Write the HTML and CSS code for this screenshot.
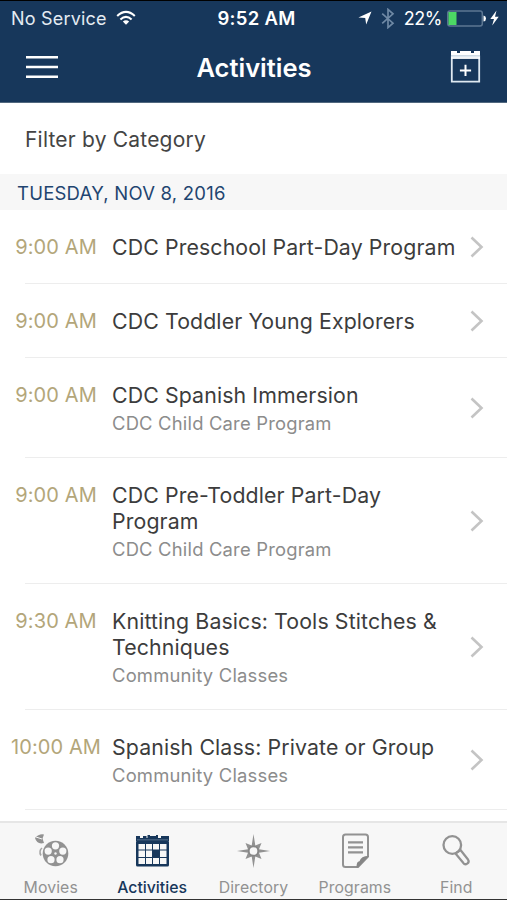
FILE: index.html
```html
<!DOCTYPE html>
<html lang="en">
<head>
    <meta charset="UTF-8">
    <meta name="viewport" content="width=device-width, initial-scale=1.0">
    <title>Activities</title>
    <link rel="stylesheet" href="styles.css">
</head>
<body>
    <div class="app">
        <!-- Header -->
        <header class="header">
            <div class="status-bar">
                <div class="status-left">
                    <span class="carrier">No Service</span>
                    <svg class="wifi" width="20" height="16" viewBox="0 0 20 16" fill="none" stroke="#fff" stroke-width="2.1">
                        <path d="M1.2 6Q10-2.2 18.8 6"/>
                        <path d="M4.4 9.4Q10 4.2 15.6 9.4"/>
                        <path d="M10 14.8L6.8 11.6Q10 8.8 13.2 11.6Z" fill="#fff" stroke="none"/>
                    </svg>
                </div>
                <span class="clock">9:52 AM</span>
                <div class="status-right">
                    <svg width="14" height="14" viewBox="0 0 14 14" fill="#fff"><path d="M13.5.5L8.2 13.5 7.2 7 .4 6.4Z"/></svg>
                    <svg class="bluetooth" width="14" height="21" viewBox="0 0 14 21" fill="none" stroke="#6f89a5" stroke-width="1.7"><path d="M1.2 5.7L12 15.2 7 19.6V1.4L12 5.8 1.2 15.3"/></svg>
                    <span class="percent">22%</span>
                    <svg class="battery" width="39" height="17" viewBox="0 0 39 17">
                        <rect x=".8" y="1" width="34.5" height="15" rx="2.2" fill="none" stroke="#5d7793" stroke-width="1.5"/>
                        <path d="M1.5 2H9.5V15H1.5Z" fill="#4cd964"/>
                        <path d="M36.5 5.5Q39 6 39 8.5T36.5 11.5Z" fill="#fff"/>
                    </svg>
                    <svg class="bolt" width="9" height="16" viewBox="0 0 9 16" fill="#fff"><path d="M6.5.5L.3 9H4L2.2 15.5 8.7 6.7H5Z"/></svg>
                </div>
            </div>
            <div class="nav-bar">
                <svg class="menu" width="32" height="24" viewBox="0 0 32 24" fill="#fff"><path d="M0 1H32V3.6H0ZM0 10.7H32V13.3H0ZM0 20.4H32V23H0Z"/></svg>
                <h1>Activities</h1>
                <svg class="add" width="31" height="32" viewBox="0 0 31 32">
                    <path d="M1 0H7V2H10V0H21V2H24V0H30V5H1Z" fill="#fff"/>
                    <path d="M1 5H30" stroke="#7f95ab" stroke-width="1"/>
                    <path d="M1.8 5.5H29.2V30.7H1.8Z" fill="none" stroke="#dfe9f1" stroke-width="1.8"/>
                    <path d="M1 7H30" stroke="#fff" stroke-width="1.8"/>
                    <path d="M15.5 13.8V25M9.9 19.4H21.1" stroke="#fff" stroke-width="2"/>
                </svg>
            </div>
        </header>

        <div class="filter">Filter by Category</div>
        <h2 class="day">TUESDAY, NOV 8, 2016</h2>

        <!-- Activities list -->
        <ul class="activities">
            <li class="activity">
                <span class="time">9:00 AM</span>
                <div class="details"><h3>CDC Preschool Part-Day Program</h3></div>
                <svg class="chevron" width="14" height="22" viewBox="0 0 14 22"><path d="M1.5 1.5L11.5 11 1.5 20.5"/></svg>
            </li>
            <li class="activity">
                <span class="time">9:00 AM</span>
                <div class="details"><h3>CDC Toddler Young Explorers</h3></div>
                <svg class="chevron" width="14" height="22" viewBox="0 0 14 22"><path d="M1.5 1.5L11.5 11 1.5 20.5"/></svg>
            </li>
            <li class="activity">
                <span class="time">9:00 AM</span>
                <div class="details">
                    <h3>CDC Spanish Immersion</h3>
                    <p>CDC Child Care Program</p>
                </div>
                <svg class="chevron" width="14" height="22" viewBox="0 0 14 22"><path d="M1.5 1.5L11.5 11 1.5 20.5"/></svg>
            </li>
            <li class="activity">
                <span class="time">9:00 AM</span>
                <div class="details">
                    <h3>CDC Pre-Toddler Part-Day<br>Program</h3>
                    <p>CDC Child Care Program</p>
                </div>
                <svg class="chevron" width="14" height="22" viewBox="0 0 14 22"><path d="M1.5 1.5L11.5 11 1.5 20.5"/></svg>
            </li>
            <li class="activity">
                <span class="time">9:30 AM</span>
                <div class="details">
                    <h3>Knitting Basics: Tools Stitches &amp;<br>Techniques</h3>
                    <p>Community Classes</p>
                </div>
                <svg class="chevron" width="14" height="22" viewBox="0 0 14 22"><path d="M1.5 1.5L11.5 11 1.5 20.5"/></svg>
            </li>
            <li class="activity">
                <span class="time">10:00 AM</span>
                <div class="details">
                    <h3>Spanish Class: Private or Group</h3>
                    <p>Community Classes</p>
                </div>
                <svg class="chevron" width="14" height="22" viewBox="0 0 14 22"><path d="M1.5 1.5L11.5 11 1.5 20.5"/></svg>
            </li>
        </ul>

        <!-- Tab bar -->
        <nav class="tab-bar">
            <a class="tab">
                <svg width="36" height="36" viewBox="0 0 36 36">
                    <circle cx="22.5" cy="20.5" r="12.8" fill="#929292"/>
                    <g fill="#f7f7f7">
                        <circle cx="22.5" cy="12.8" r="3.6"/>
                        <circle cx="29.8" cy="18.1" r="3.6"/>
                        <circle cx="27" cy="26.7" r="3.6"/>
                        <circle cx="18" cy="26.7" r="3.6"/>
                        <circle cx="15.2" cy="18.1" r="3.6"/>
                        <circle cx="22.5" cy="20.5" r="1.2"/>
                    </g>
                    <path d="M2 5Q6 .5 11 1.5L9.5 5.5 11 10Q4 12 2 5Z" fill="#929292"/>
                    <path d="M3 4L9 6" stroke="#f7f7f7" stroke-width="1"/>
                    <path d="M9 15Q5.5 18 8 22.5" fill="none" stroke="#a5a5a5" stroke-width="1.6"/>
                </svg>
                <span>Movies</span>
            </a>
            <a class="tab active">
                <svg width="36" height="36" viewBox="0 0 36 36">
                    <path d="M2 3H6V5H9V3H13V2H24V5H27V3H35V8H2Z" fill="#17375b"/>
                    <path d="M13 1.5V5M16 2.5H22" stroke="#f7f7f7" stroke-width="1"/>
                    <path d="M3 7H34" stroke="#8296ab" stroke-width=".8"/>
                    <rect x="2" y="7.5" width="33" height="26" rx="1.5" fill="#17375b"/>
                    <g fill="#f7f7f7">
                        <path d="M4.5 11H11V16.5H4.5ZM12 11H18V16.5H12ZM19 11H25V16.5H19ZM26 11H32.5V16.5H26Z"/>
                        <path d="M4.5 17.5H11V24H4.5ZM12 17.5H18V24H12ZM26 17.5H32.5V24H26Z"/>
                        <path d="M4.5 25H11V31H4.5ZM12 25H18V31H12ZM19 25H25V31H19ZM26 25H32.5V31H26Z"/>
                    </g>
                </svg>
                <span>Activities</span>
            </a>
            <a class="tab">
                <svg width="36" height="36" viewBox="0 0 36 36">
                    <path d="M18.5 1L20.3 12.5 26.5 10 24 16.2 35 18 24 19.8 26.5 26 20.3 23.5 18.5 35 16.7 23.5 10.5 26 13 19.8 2 18 13 16.2 10.5 10 16.7 12.5Z" fill="#929292"/>
                    <circle cx="18.5" cy="18" r="4.7" fill="#f7f7f7" stroke="#868686" stroke-width="1.7"/>
                </svg>
                <span>Directory</span>
            </a>
            <a class="tab">
                <svg width="36" height="36" viewBox="0 0 36 36">
                    <path d="M8.5 1.5H28.5Q31 1.5 31 4V23.5L21 34H8.5Q6 34 6 31.5V4Q6 1.5 8.5 1.5Z" fill="none" stroke="#929292" stroke-width="2"/>
                    <path d="M31.5 23.5L21 34.5H19.5Q19.5 28 22.5 28.2 24 23 31.5 23Z" fill="#868686"/>
                    <path d="M11 9.3H26M11 14.3H26M11 19.3H26" stroke="#929292" stroke-width="2.2"/>
                </svg>
                <span>Programs</span>
            </a>
            <a class="tab">
                <svg width="36" height="36" viewBox="0 0 36 36" fill="none" stroke="#929292">
                    <circle cx="14.3" cy="12" r="8.8" stroke-width="2.3"/>
                    <path d="M17.5 20.5L25.2 29.8A2.9 2.9 0 0 0 30 26.5L22.5 17Z" stroke-width="2.2" stroke-linejoin="round"/>
                </svg>
                <span>Find</span>
            </a>
        </nav>
    </div>
</body>
</html>
```

FILE: styles.css
```css
* {
    margin: 0;
    padding: 0;
    box-sizing: border-box;
    font-family: Inter, 'Liberation Sans', sans-serif;
}

body {
    background: #fff;
}

.app {
    display: flex;
    flex-direction: column;
    width: 507px;
    height: 900px;
    overflow: hidden;
}

svg {
    display: block;
    flex-shrink: 0;
}

.header {
    height: 103px;
    background: #17375b;
    border-top: 1px solid #000;
    border-bottom: 1px solid #51687f;
    color: #fff;
}

.status-bar {
    display: grid;
    grid-template-columns: 1fr auto 1fr;
    align-items: center;
    height: 34px;
    padding: 0 8px 0 11px;
    font-size: 18px;
}

.status-left,
.status-right {
    display: flex;
    align-items: center;
}

.status-right {
    justify-content: flex-end;
}

.carrier {
    letter-spacing: 0.2px;
    color: #e4ebf2;
}

.wifi {
    margin-left: 9px;
}

.clock {
    padding-left: 3px;
    font-size: 18.5px;
    font-weight: 600;
    letter-spacing: 0.3px;
}

.bluetooth {
    margin: 0 9px 0 9px;
}

.percent {
    letter-spacing: -0.5px;
}

.battery {
    margin: 0 4px 0 5px;
}

.nav-bar {
    display: flex;
    justify-content: space-between;
    align-items: center;
    height: 64px;
    padding: 0 26px;
}

.nav-bar h1 {
    font-size: 25.5px;
    font-weight: 600;
}

.filter {
    height: 71px;
    padding-left: 25px;
    font-size: 21px;
    letter-spacing: 0.2px;
    line-height: 73px;
    color: #444;
}

.day {
    height: 36px;
    padding-left: 17px;
    background: #f7f7f7;
    font-size: 18.5px;
    font-weight: 400;
    letter-spacing: 0.22px;
    line-height: 39px;
    color: #1f4570;
}

.activities {
    flex: 1;
    list-style: none;
}

.activity {
    display: flex;
    padding: 24px 23px 24px 0;
    background: linear-gradient(#ededed, #ededed) 25px 100% / 100% 1px no-repeat;
}

.time {
    width: 112px;
    text-align: center;
    font-size: 20px;
    letter-spacing: 0.1px;
    line-height: 26px;
    color: #b3a67a;
}

.details {
    flex: 1;
    white-space: nowrap;
}

.details h3 {
    font-size: 21.3px;
    font-weight: 400;
    letter-spacing: 0.12px;
    line-height: 26px;
    color: #3c3c3c;
}

.details p {
    margin-bottom: -4px;
    font-size: 18.4px;
    letter-spacing: 0.2px;
    line-height: 30px;
    color: #8c8c8c;
}

.chevron {
    align-self: center;
    fill: none;
    stroke: #c4c4c4;
    stroke-width: 2.6;
}

.tab-bar {
    display: grid;
    grid-template-columns: repeat(5, 1fr);
    height: 79px;
    background: #f7f7f7;
    border-top: 2px solid #e6e6e6;
    border-bottom: 1px solid #333;
}

.tab {
    display: flex;
    flex-direction: column;
    align-items: center;
    padding-top: 10px;
    font-size: 15.8px;
    letter-spacing: 0.1px;
    line-height: 20px;
    color: #929292;
}

.tab span {
    margin-top: 9px;
}

.tab.active {
    color: #17375b;
    font-weight: 500;
    letter-spacing: 0;
}
```
